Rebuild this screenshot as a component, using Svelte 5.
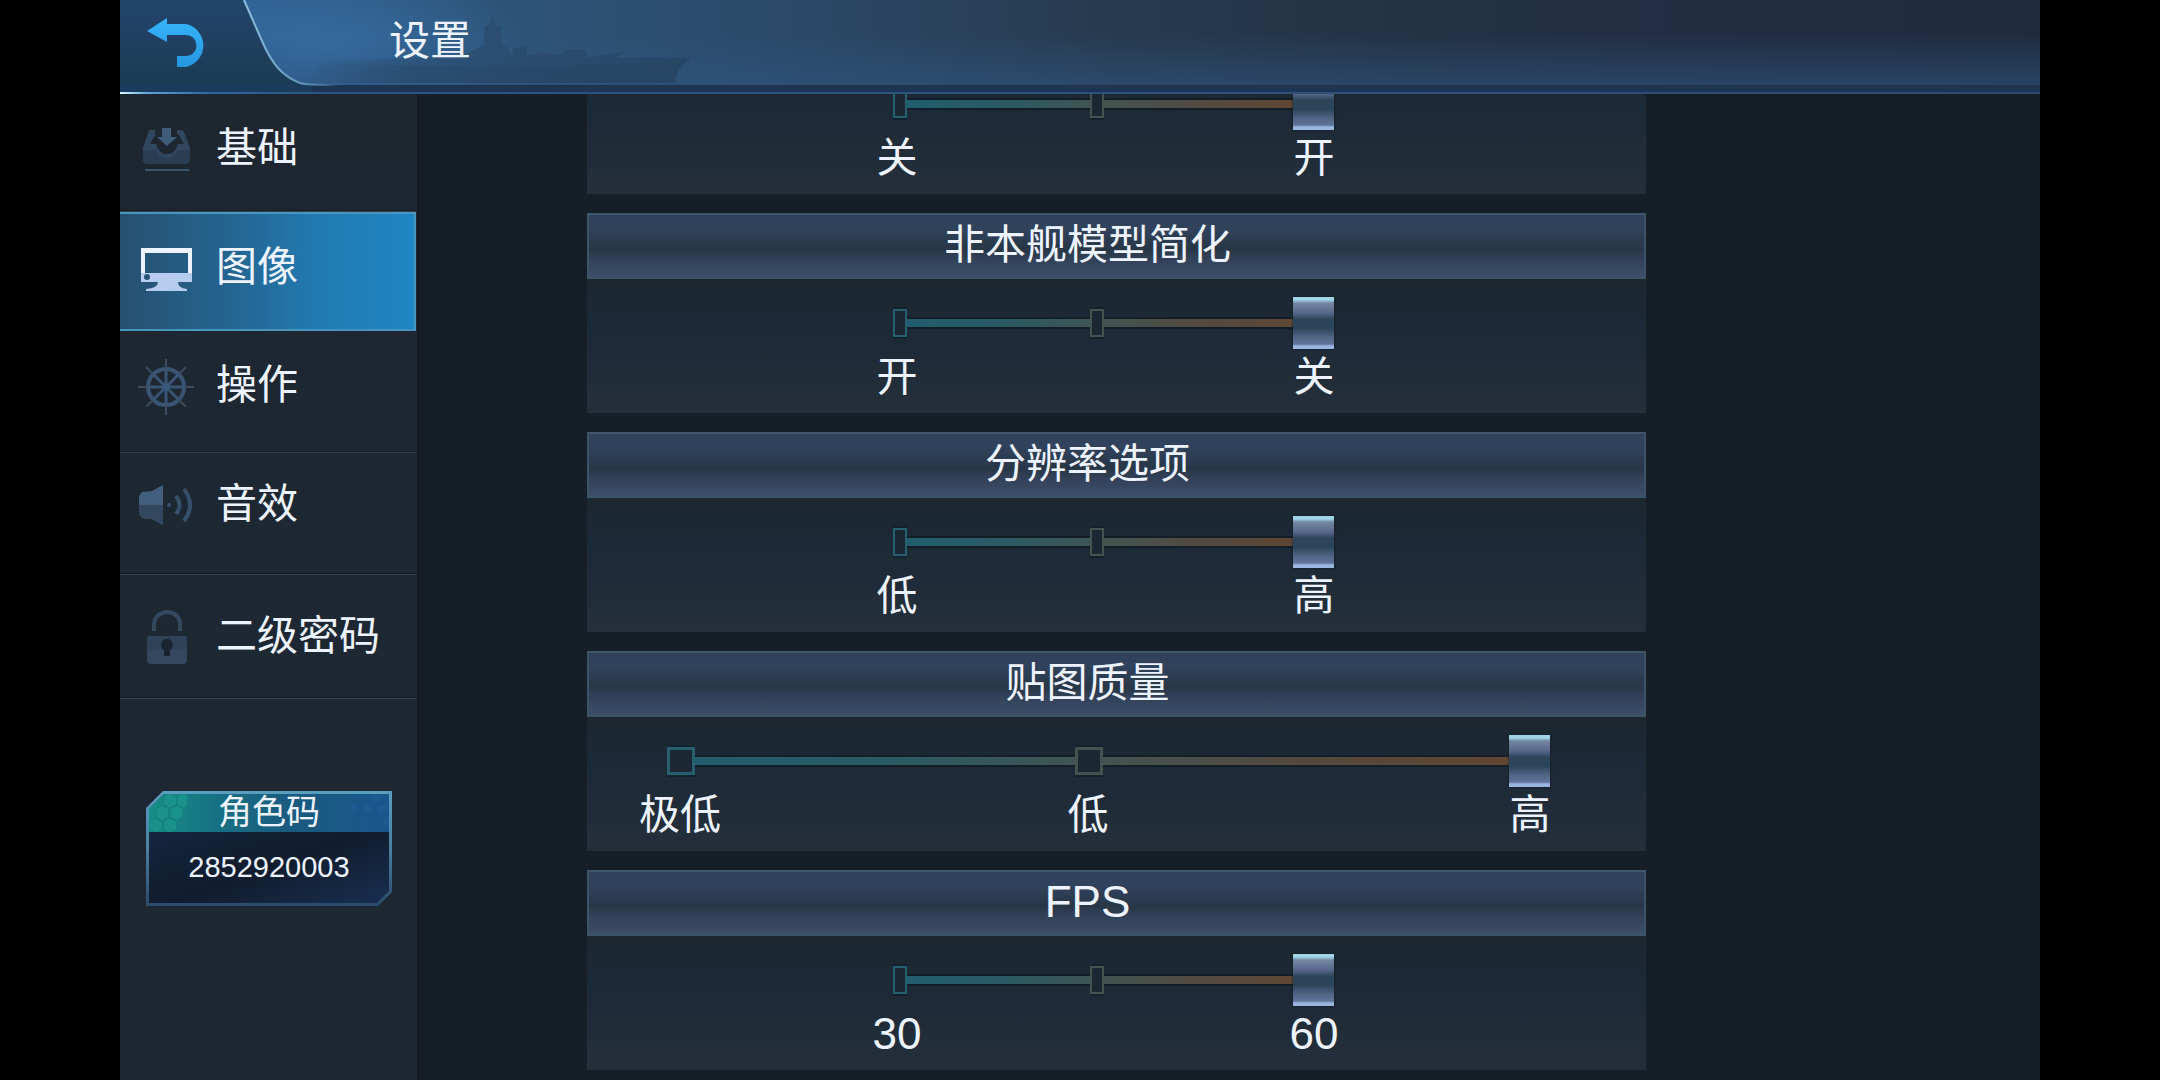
<script>
  const tabs = [
    { id: 'basic', label: '基础' },
    { id: 'image', label: '图像' },
    { id: 'control', label: '操作' },
    { id: 'sound', label: '音效' },
    { id: 'password', label: '二级密码' }
  ];
  let active = $state('image');

  let settings = $state([
    { title: '', name: '开关', stops: ['关', '', '开'], value: 2 },
    { title: '非本舰模型简化', stops: ['开', '', '关'], value: 2 },
    { title: '分辨率选项', stops: ['低', '', '高'], value: 2 },
    { title: '贴图质量', stops: ['极低', '低', '高'], value: 2, wide: true },
    { title: 'FPS', stops: ['30', '', '60'], value: 2, latin: true }
  ]);

  const spokes = [0, 45, 90, 135, 180, 225, 270, 315];
</script>

<div class="stage">
  <header>
    <svg class="ship" viewBox="0 0 400 70" aria-hidden="true">
      <defs>
        <linearGradient id="ship-fade" x1="0" y1="0" x2="1" y2="0">
          <stop offset="0" stop-color="#25405c" stop-opacity="0" />
          <stop offset="0.3" stop-color="#25405c" stop-opacity="0.45" />
          <stop offset="1" stop-color="#25405c" stop-opacity="0.7" />
        </linearGradient>
      </defs>
      <path fill="url(#ship-fade)" d="M0 68 L20 46 L110 42 L150 40 L168 38 L178 32 L186 30 L186 10 L191 8 L193 0 L196 0 L198 8 L203 10 L204 28 L210 32 L214 40 L216 32 L228 30 L230 40 L246 36 L262 40 L272 34 L290 34 L292 42 L330 36 L322 42 L398 42 L386 54 L382 68 Z" />
      <path fill="url(#ship-fade)" d="M20 48 L240 52 L398 43 L386 54 L382 68 L0 68 Z" />
    </svg>
    <svg class="corner" viewBox="0 0 220 94" aria-hidden="true">
      <defs>
        <linearGradient id="corner-fill" x1="0" y1="0" x2="0" y2="1">
          <stop offset="0" stop-color="#21456b" />
          <stop offset="0.5" stop-color="#213f5f" />
          <stop offset="0.85" stop-color="#1b3c54" />
          <stop offset="1" stop-color="#1a3a62" />
        </linearGradient>
        <linearGradient id="corner-line" x1="0" y1="0" x2="1" y2="0">
          <stop offset="0" stop-color="#8fc0e0" />
          <stop offset="0.55" stop-color="#6598bd" />
          <stop offset="0.75" stop-color="#4d7fa8" />
          <stop offset="1" stop-color="#4d7fa8" stop-opacity="0" />
        </linearGradient>
      </defs>
      <path d="M0 0 H124 L142 41 C152 64 162 76 180 83 Q184 85 192 85 V94 H0 Z" fill="url(#corner-fill)" />
      <path d="M124 0 L142 41 C152 64 162 76 180 83 Q186 85 220 85" fill="none" stroke="url(#corner-line)" stroke-width="2" />
    </svg>
    <button class="back" aria-label="返回">
      <svg viewBox="0 0 62 50" aria-hidden="true">
        <defs>
          <linearGradient id="back-fill" x1="0" y1="0" x2="0" y2="1">
            <stop offset="0" stop-color="#36b4fb" />
            <stop offset="1" stop-color="#2597e0" />
          </linearGradient>
        </defs>
        <path d="M0 13 L20 0 V6 H39 A22 22 0 0 1 39 49 H30 V38 H39 A10 10 0 0 0 39 17 H20 V24 Z" fill="url(#back-fill)" />
      </svg>
    </button>
    <h1>设置</h1>
  </header>

  <div class="content">
    <aside>
      <nav>
        {#each tabs as tab (tab.id)}
          <button class="tab" class:active={active === tab.id} onclick={() => (active = tab.id)}>
            <svg viewBox="0 0 60 60" aria-hidden="true">
              {#if tab.id === 'basic'}
                <path d="M13 10 H19 V15 L14 24 H20 Q23 34 31 34 Q39 34 42 24 H48 L43 15 L41 14 V10 H46 L48 12 L54 28 V39 Q54 44 49 44 H12 Q7 44 7 39 V28 Z" fill="#31475e" />
                <path d="M7 30 H20 Q24 38 31 38 Q38 38 42 30 H54 V38 Q54 44 49 44 H12 Q7 44 7 38 Z" fill="#2b3d52" />
                <path d="M26 8 H35 V17 H41 L31 26 L21 17 H26 Z" fill="#3f5c7b" />
                <path d="M9 49 H53 V51 H9 Z" fill="#3b546e" />
              {:else if tab.id === 'image'}
                <path d="M5 9 H56 V43 H5 Z M9 14 V34 H52 V14 Z" fill="#edf4ff" fill-rule="evenodd" />
                <path d="M5 34 H56 V43 H42 Q42 49 51 50 V52 H10 V50 Q22 49 22 43 H5 Z" fill="#b6cdf0" />
                <circle cx="11" cy="38" r="3" fill="#285273" />
              {:else if tab.id === 'control'}
                <g stroke="#3a5474" fill="none">
                  <circle cx="30" cy="30" r="18" stroke-width="4" />
                  {#each spokes as angle}
                    <path d="M30 30 V12" stroke-width="3" transform="rotate({angle} 30 30)" />
                    <path d="M30 12 V2" stroke="#3c4b5e" stroke-width="2" transform="rotate({angle} 30 30)" />
                  {/each}
                  <circle cx="30" cy="30" r="4" fill="#3c5b80" />
                </g>
              {:else if tab.id === 'sound'}
                <path d="M6 16 L16 15 L27 9 V49 L16 43 L9 43 Q3 41 3 36 V20 Z" fill="#42607d" />
                <path d="M3 29 H27 V49 L16 43 L9 43 Q3 41 3 36 Z" fill="#33485e" />
                <circle cx="33" cy="29" r="2" fill="#3a516a" />
                <path d="M40 20 Q47 29 40 38" fill="none" stroke="#36506a" stroke-width="4" />
                <path d="M48 13 Q60 29 48 45" fill="none" stroke="#36506a" stroke-width="4" />
              {:else}
                <path d="M18 23 V15 Q20 5 31 4 Q43 5 44 15 V23" fill="none" stroke="#35495e" stroke-width="4" />
                <rect x="11" y="28" width="40" height="28" rx="4" fill="#33475f" />
                <rect x="11" y="28" width="40" height="14" rx="3" fill="#304257" />
                <path d="M31 31 A6 6 0 0 1 34 42 V48 H28 V42 A6 6 0 0 1 31 31 Z" fill="#1a2430" />
              {/if}
            </svg>
            <span>{tab.label}</span>
          </button>
        {/each}
      </nav>

      <section class="code">
        <div class="code-inner">
          <h2>
            <svg class="hex" viewBox="0 0 40 40" aria-hidden="true">
              <path d="M14 12 l7 4 v8 l-7 4 l-7 -4 v-8 Z M29 12 l7 4 v8 l-7 4 l-7 -4 v-8 Z M22 -1 l7 4 v8 l-7 4 l-7 -4 v-8 Z M22 25 l7 4 v8 l-7 4 l-7 -4 v-8 Z M7 25 l7 4 v8 l-7 4 l-7 -4 v-8 Z M36 -1 l7 4 v8 l-7 4 l-7 -4 v-8 Z" />
            </svg>
            <span>角色码</span>
            <svg class="hex far" viewBox="0 0 40 40" aria-hidden="true">
              <path d="M3 9 l6 3 v7 l-6 4 l-6 -4 v-7 Z M18 9 l6 3 v7 l-6 4 l-6 -4 v-7 Z M33 9 l6 3 v7 l-6 4 l-6 -4 v-7 Z M26 -3 l6 3 v7 l-6 4 l-6 -4 v-7 Z M40 22 l6 3 v7 l-6 4 l-6 -4 v-7 Z" />
            </svg>
          </h2>
          <p>2852920003</p>
        </div>
      </section>
    </aside>

    <main>
      {#each settings as item}
        <section class="panel" class:wide={item.wide} class:latin={item.latin}>
          {#if item.title}<h2>{item.title}</h2>{/if}
          <div class="body">
            <div class="slider">
              <div class="track" aria-hidden="true">
                <i class="stop low"></i>
                <i class="stop mid"></i>
              </div>
              <input
                type="range"
                min="0"
                max="2"
                step="1"
                bind:value={item.value}
                aria-label={item.title || item.name}
              />
            </div>
            <div class="labels">
              {#each item.stops as stop}<span>{stop}</span>{/each}
            </div>
          </div>
        </section>
      {/each}
    </main>
  </div>
</div>

<style>
  :global(body) {
    margin: 0;
    background: #000;
  }
  .stage {
    display: flex;
    flex-direction: column;
    height: 100vh;
    margin: 0 120px;
    overflow: hidden;
    background: #161e27;
    color: #eef4ff;
    font-family: 'Liberation Sans', 'Noto Sans CJK SC', sans-serif;
    font-size: 41px;
    font-weight: 400;
  }
  h1,
  h2,
  p {
    margin: 0;
    font-weight: 400;
  }
  button {
    padding: 0;
    border: 0;
    background: none;
    color: inherit;
    font: inherit;
    cursor: pointer;
  }

  header {
    position: relative;
    z-index: 1;
    display: flex;
    flex: none;
    align-items: flex-start;
    height: 94px;
    background:
      linear-gradient(90deg, #d8fbff 0, #5aa9d6 26px, #2d669c 90px, #2a5580 220px, #2f5377 60%, #33496d) 0 92px / 100% 2px no-repeat,
      linear-gradient(#20344c, #1a355a) 0 85px / 100% 7px no-repeat,
      linear-gradient(transparent 40%, #2f558090) 0 0 / 100% 85px no-repeat,
      radial-gradient(ellipse 200px 80px at 210px 50px, #3a76b0a0, transparent) 0 0 / 100% 85px no-repeat,
      linear-gradient(90deg, #2f6090 120px, #2d5478 380px, #2c4a6a 640px, #273a4e 1000px, #233244 1300px, #222d42 1600px, #1f2c3e);
  }
  .corner {
    position: absolute;
    top: 0;
    left: 0;
    width: 220px;
    height: 94px;
    clip-path: inset(0 0 2px 0);
  }
  .ship {
    position: absolute;
    top: 17px;
    left: 178px;
    width: 400px;
    height: 68px;
    opacity: 0.7;
  }
  .back {
    z-index: 1;
    width: 182px;
    height: 85px;
  }
  .back svg {
    display: block;
    width: 62px;
    height: 50px;
    margin-left: 27px;
  }
  h1 {
    z-index: 1;
    margin-left: 87px;
    font-size: 41px;
    line-height: 82px;
  }

  .content {
    display: flex;
    flex: 1;
    min-height: 0;
  }
  aside {
    flex: none;
    width: 297px;
    background: linear-gradient(#1e2630, #1d2833 50%, #1e2732);
    box-shadow: 0 0 6px #10161e;
  }
  nav {
    display: grid;
    grid-template-rows: 118px 119px 122px 122px 124px;
    padding-right: 1px;
  }
  .tab {
    box-sizing: border-box;
    display: flex;
    align-items: center;
    gap: 20px;
    padding: 0 0 6px 16px;
    border-bottom: 1px solid #34424e;
    box-shadow: inset 0 -1px #141c25;
  }
  .tab:nth-child(3) {
    padding-bottom: 10px;
  }
  .tab:nth-child(4) {
    padding-bottom: 16px;
  }
  .tab:last-child {
    padding-top: 2px;
    padding-bottom: 0;
  }
  .tab svg {
    width: 60px;
    height: 60px;
  }
  .tab.active {
    border: 2px solid #4796bd;
    border-left: 0;
    background: linear-gradient(90deg, #275070, #246591 38%, #2279b0 65%, #1f86c3);
    box-shadow: none;
  }
  .tab span {
    line-height: 58px;
    padding-bottom: 4px;
  }

  .code {
    margin: 92px 25px 0 26px;
    padding: 3px;
    clip-path: polygon(17px 0, 100% 0, 100% calc(100% - 14px), calc(100% - 14px) 100%, 0 100%, 0 17px);
    background: linear-gradient(#5a9ec0, #4a80a0 50%, #2c4a6c);
  }
  .code-inner {
    clip-path: polygon(15px 0, 100% 0, 100% calc(100% - 12px), calc(100% - 12px) 100%, 0 100%, 0 15px);
    background: linear-gradient(160deg, #162a48, #122034 40%, #111d2e 60%, #182e50);
    text-align: center;
  }
  .code h2 {
    display: flex;
    justify-content: space-between;
    height: 38px;
    background: linear-gradient(90deg, #168f86, #176f83 30%, #1a5a80 60%, #1b568c);
    font-size: 34px;
    line-height: 37px;
  }
  .hex {
    width: 38px;
    height: 38px;
    fill: #1a918a;
    stroke: #167f80;
    stroke-width: 1;
  }
  .hex.far {
    fill: #1c5a90;
    stroke: #1b5388;
  }
  .code p {
    font-size: 29px;
    line-height: 71px;
  }

  main {
    display: flex;
    flex: 1;
    flex-direction: column;
    gap: 19px;
    min-width: 0;
    margin-top: -34px;
    padding: 0 394px 0 170px;
  }
  .panel h2 {
    box-sizing: border-box;
    height: 66px;
    padding-right: 58px;
    border: 2px solid #3c5468;
    border-top-color: #40566b;
    background: linear-gradient(#31415d, #30425c 22%, #2a394b 48%, #283746 55%, #34435c 75%, #3c4e69);
    font-size: 41px;
    line-height: 60px;
    text-align: center;
  }
  .body {
    box-sizing: border-box;
    height: 134px;
    padding: 17px 292px 0 270px;
    background: linear-gradient(#1c272f, #1c2936 30%, #222e3a 85%, #272e3a);
  }
  .slider {
    display: grid;
    align-items: center;
    height: 54px;
    margin: 0 20px 0 36px;
  }
  .track,
  .slider input {
    grid-area: 1 / 1;
  }
  .track {
    display: grid;
    grid-template-columns: 14px 183fr 14px 190fr 41px;
    align-items: center;
    height: 28px;
    background:
      linear-gradient(90deg, #205e70, #2a5a64 25%, #445350 50%, #54493f 72%, #64462e) 0 50% / 100% 8px no-repeat,
      linear-gradient(#141e27, #141e27) 0 50% / 100% 12px no-repeat;
  }
  .stop {
    box-sizing: border-box;
    height: 28px;
    border: 2px solid #26606e;
    background: #1b2834;
    box-shadow: 0 2px #13232d, 0 -2px #13232d;
  }
  .stop.mid {
    grid-column: 3;
    border-color: #43534f;
  }
  .slider input {
    width: 100%;
    height: 52px;
    margin: 0;
    appearance: none;
    background: none;
    cursor: pointer;
  }
  .slider input::-webkit-slider-thumb {
    width: 41px;
    height: 52px;
    appearance: none;
    border: 0;
    border-radius: 0;
    background: linear-gradient(#a0d4e6 0 3px, #7488a2 6px, #57678a 16px, #2e465c 22px, #2b4459 31px, #506484 40px, #60739a 47px, #9ab6de 49px);
    box-shadow: 0 0 2px #0c141c;
  }
  .labels {
    display: grid;
    grid-template-columns: 80px 10fr 80px 11fr 80px;
    line-height: 54px;
    text-align: center;
    white-space: nowrap;
  }
  .labels span:nth-child(2) {
    grid-column: 3;
  }
  .labels span:nth-child(3) {
    grid-column: 5;
  }
  .wide .body {
    padding-right: 76px;
    padding-left: 52px;
  }
  .wide .slider {
    margin-left: 28px;
  }
  .wide .track {
    grid-template-columns: 28px 380fr 28px 407fr 41px;
  }
  .wide .stop {
    border-width: 3px;
  }
  .latin h2,
  .latin .labels {
    font-size: 44px;
  }
</style>
